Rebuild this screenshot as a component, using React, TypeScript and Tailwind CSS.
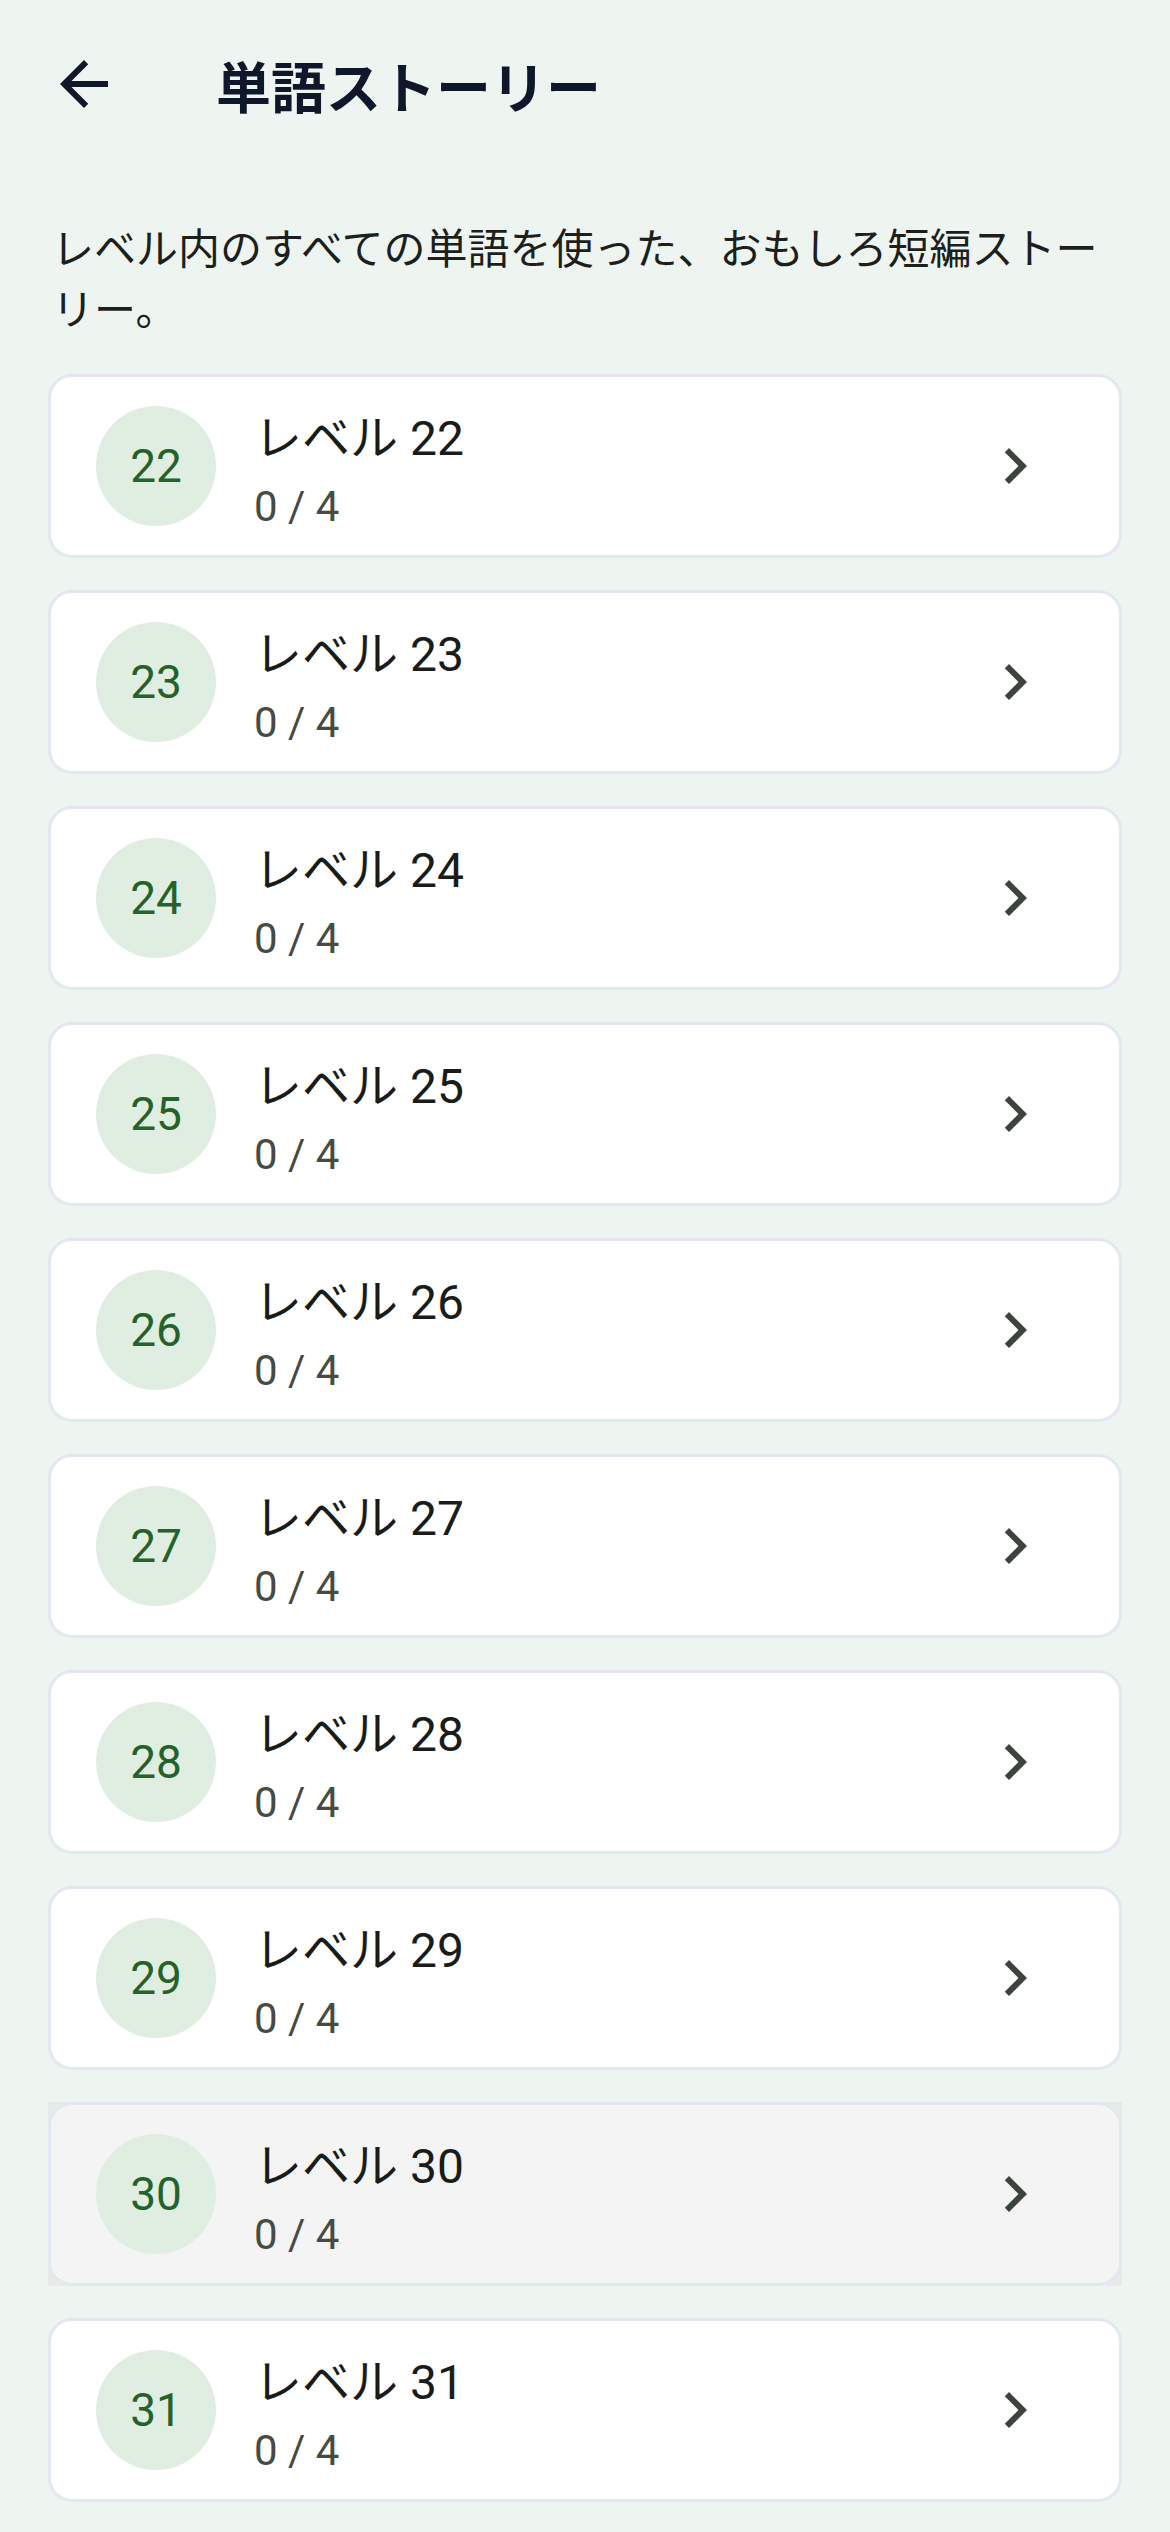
import React from "react";

const levels = [22, 23, 24, 25, 26, 27, 28, 29, 30, 31];

function Chevron() {
  return (
    <svg width="72" height="72" viewBox="0 0 24 24" className="shrink-0">
      <path d="M10 6L8.59 7.41 13.17 12l-4.58 4.59L10 18l6-6z" fill="#3c433d" />
    </svg>
  );
}

function Card({ n, pressed }: { n: number; pressed?: boolean }) {
  return (
    <div
      className={`flex h-[184px] items-center rounded-[24px] border-[3px] border-[#e2e8f0] pl-[45px] pr-[68px] ${
        pressed ? "bg-[#f4f4f4]" : "bg-white"
      }`}
    >
      <div className="flex h-[120px] w-[120px] shrink-0 items-center justify-center rounded-full bg-[#e0ede1] text-[46px] text-[#24622a] [font-family:Roboto,'Noto_Sans_CJK_JP',sans-serif]">
        {n}
      </div>
      <div className="ml-[38px] flex flex-1 flex-col pt-[10px] [font-family:Roboto,'Noto_Sans_CJK_JP',sans-serif]">
        <div className="text-[48px] leading-[56px] text-[#1a1c19]">レベル {n}</div>
        <div className="mt-[15px] text-[42px] leading-[50px] text-[#464b45]">0 / 4</div>
      </div>
      <Chevron />
    </div>
  );
}

export default function App() {
  return (
    <div className="min-h-screen w-full bg-[#eef5f0] pb-[31px]">
      <div className="flex h-[168px] items-center">
        <div className="ml-[48px] flex h-[72px] w-[72px] items-center justify-center">
          <svg width="72" height="72" viewBox="0 0 24 24">
            <path
              d="M20 11H7.83l5.59-5.59L12 4l-8 8 8 8 1.41-1.41L7.83 13H20v-2z"
              fill="#0f172a"
            />
          </svg>
        </div>
        <div className="ml-[96px] text-[55px] font-bold text-[#0f172a] [font-family:'Noto_Sans_CJK_JP',sans-serif]">
          単語ストーリー
        </div>
      </div>
      <p className="mt-[47px] px-[52px] text-[42px] leading-[61px] text-[#1c1f1c] [font-family:'Noto_Sans_CJK_JP',sans-serif]">
        レベル内のすべての単語を使った、おもしろ短編ストーリー。
      </p>
      <div className="mt-[37px] flex flex-col gap-[32px] px-[48px]">
        {levels.map((n) =>
          n === 30 ? (
            <div key={n} className="bg-[#e6ebe8]">
              <Card n={n} pressed />
            </div>
          ) : (
            <Card key={n} n={n} />
          )
        )}
      </div>
    </div>
  );
}
